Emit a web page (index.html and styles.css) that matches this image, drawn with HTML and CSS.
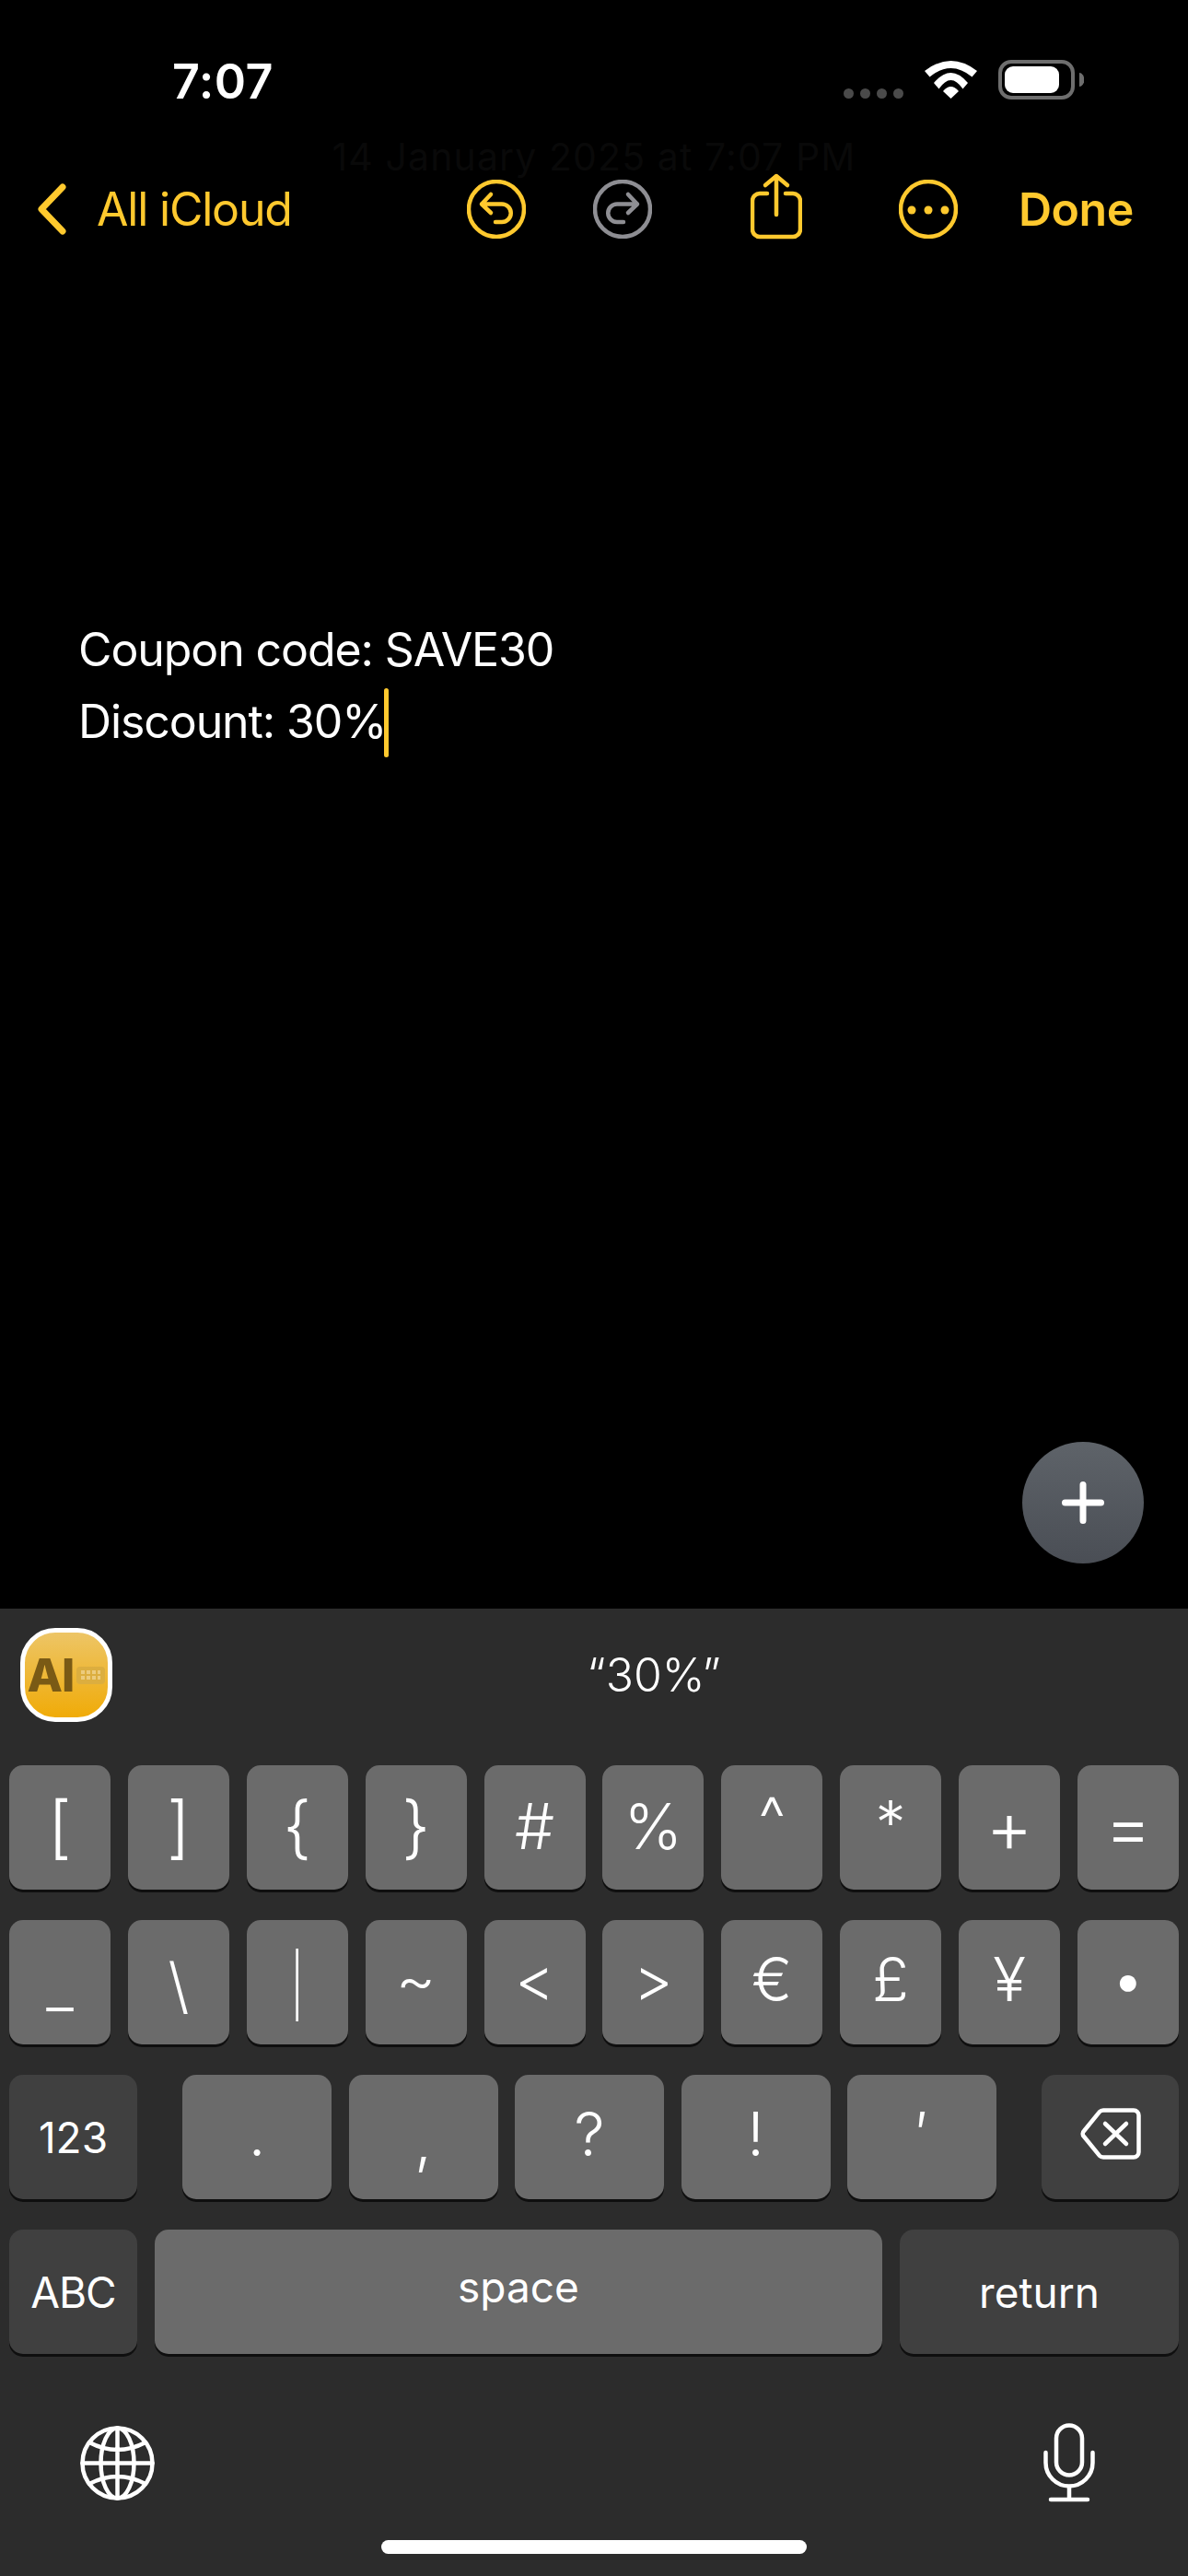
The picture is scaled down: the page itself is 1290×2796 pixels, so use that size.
FILE: index.html
```html
<!DOCTYPE html>
<html lang="en">
<head>
<meta charset="UTF-8">
<meta name="viewport" content="width=device-width, initial-scale=1.0">
<title>Notes</title>
<link rel="stylesheet" href="styles.css">
</head>
<body>
<div class="phone">
    <div class="status-bar">
        <div class="time">7:07</div>
        <div class="status-icons">
            <div class="signal"><span></span><span></span><span></span><span></span></div>
            <svg class="wifi" width="57" height="41" viewBox="0 0 57 41">
                <path d="M0 11Q28.5 -11 57 11L51.5 17.5Q28.5 -1.5 5.5 17.5Z"/>
                <path d="M10 24Q28.5 2 47 24L41.5 30.5Q28.5 11.5 15.5 30.5Z"/>
                <path d="M20 33Q28.5 23 37 33L28.5 41Z"/>
            </svg>
            <svg class="battery" width="93" height="43" viewBox="0 0 93 43">
                <rect x="2" y="2" width="79" height="39" rx="12" fill="none" stroke="#6e6e6e" stroke-width="4"/>
                <rect x="7" y="7" width="59" height="29" rx="9" fill="#fff"/>
                <path d="M88 14a5 7 0 0 1 0 15Z" fill="#6e6e6e"/>
            </svg>
        </div>
    </div>

    <div class="nav">
        <div class="nav-date">14 January 2025 at 7:07 PM</div>
        <svg class="icon chevron" width="32" height="56" viewBox="0 0 32 56">
            <path d="M27 4L4 28L27 52" stroke-width="7"/>
        </svg>
        <div class="nav-back">All iCloud</div>
        <div class="nav-actions">
            <svg class="icon" width="64" height="64" viewBox="0 0 64 64">
                <circle cx="32" cy="32" r="30"/>
                <path d="M26 16L16 26.5L26 36M16 26.5H38a9.75 9.75 0 0 1 0 19.5H31"/>
            </svg>
            <svg class="icon icon-off redo" width="64" height="64" viewBox="0 0 64 64">
                <circle cx="32" cy="32" r="30"/>
                <path d="M38 16L48 26.5L38 36M48 26.5H26a9.75 9.75 0 0 0 0 19.5H33"/>
            </svg>
            <svg class="icon share" width="56" height="72" viewBox="0 0 56 72">
                <path d="M18 22H10a8 8 0 0 0-8 8V61a8 8 0 0 0 8 8H46a8 8 0 0 0 8-8V30a8 8 0 0 0-8-8H38"/>
                <path d="M28 45V3M16 13L28 3L40 13"/>
            </svg>
            <svg class="icon more" width="64" height="64" viewBox="0 0 64 64">
                <circle cx="32" cy="32" r="30"/>
                <circle class="dot" cx="14" cy="33" r="4.5"/>
                <circle class="dot" cx="32" cy="33" r="4.5"/>
                <circle class="dot" cx="50" cy="33" r="4.5"/>
            </svg>
            <div class="nav-done">Done</div>
        </div>
    </div>

    <div class="note">
        <div class="note-line">Coupon code: SAVE30</div>
        <div class="note-line">Discount: 30%<span class="caret"></span></div>
        <div class="fab">
            <svg width="54" height="54" viewBox="0 0 54 54">
                <path d="M27 7.500V46.500M7.500 27H46.500" stroke="#fff" stroke-width="7" stroke-linecap="round"/>
            </svg>
        </div>
    </div>

    <div class="keyboard">
        <div class="suggest-bar">
            <div class="ai-badge">
                <span class="ai-text">AI</span>
                <svg class="ai-keys" width="31" height="19" viewBox="0 0 31 19">
                    <rect width="31" height="19" rx="4" fill="#dcae3f"/>
                    <path d="M5 6H26M5 12H26" stroke="#eccb7c" stroke-width="4" stroke-dasharray="4 2"/>
                </svg>
            </div>
            <div class="suggest-text">“30%”</div>
        </div>

        <div class="key-rows">
            <div class="key-row">
                <div class="key key-tall">[</div>
                <div class="key key-tall">]</div>
                <div class="key key-tall">{</div>
                <div class="key key-tall">}</div>
                <div class="key key-sym">#</div>
                <div class="key key-sym">%</div>
                <div class="key key-high">^</div>
                <div class="key key-star">*</div>
                <div class="key key-math">+</div>
                <div class="key key-math">=</div>
            </div>
            <div class="key-row">
                <div class="key key-drop">_</div>
                <div class="key key-drop">\</div>
                <div class="key key-drop key-thin">|</div>
                <div class="key">~</div>
                <div class="key">&lt;</div>
                <div class="key">&gt;</div>
                <div class="key">€</div>
                <div class="key">£</div>
                <div class="key">¥</div>
                <div class="key">•</div>
            </div>
            <div class="key-row">
                <div class="key key-dark key-side key-label">123</div>
                <div class="key-group">
                    <div class="key key-punct">.</div>
                    <div class="key key-punct key-drop">,</div>
                    <div class="key key-punct">?</div>
                    <div class="key key-punct">!</div>
                    <div class="key key-punct">′</div>
                </div>
                <div class="key key-dark key-delete">
                    <svg class="backspace" width="66" height="56" viewBox="0 0 66 56">
                        <path d="M25 2.5H58a5.5 5.5 0 0 1 5.5 5.5V48a5.5 5.5 0 0 1-5.5 5.5H25a6 6 0 0 1-4.2-1.8L4 31a4 4 0 0 1 0-6L20.800 4.300A6 6 0 0 1 25 2.500Z"/>
                        <path d="M27 17L50 39M50 17L27 39"/>
                    </svg>
                </div>
            </div>
            <div class="key-row">
                <div class="key key-dark key-side key-label key-abc">ABC</div>
                <div class="key key-space key-label">space</div>
                <div class="key key-dark key-return key-label">return</div>
            </div>
        </div>

        <div class="keyboard-tools">
            <svg class="tool" width="81" height="81" viewBox="0 0 81 81">
                <circle cx="40.500" cy="40.500" r="38"/>
                <ellipse cx="40.500" cy="40.500" rx="18" ry="38"/>
                <path d="M40.500 2.500V78.500M2.500 40.500H78.500M10 18Q40.500 34 71 18M10 63Q40.500 47 71 63"/>
            </svg>
            <svg class="tool" width="56" height="86" viewBox="0 0 56 86">
                <rect x="14" y="2.500" width="28" height="54" rx="14"/>
                <path d="M2.500 32V43a25.500 25.500 0 0 0 51 0V32M28 68.500V83M8 83H48"/>
            </svg>
        </div>
        <div class="home-bar"></div>
    </div>
</div>
</body>
</html>
```

FILE: styles.css
```css
* {
    box-sizing: border-box;
}
body {
    margin: 0;
    background-color: #000;
    font-family: Inter, "Noto Sans", sans-serif;
    color: #fff;
}
.phone {
    width: 1290px;
    height: 2796px;
    display: flex;
    flex-direction: column;
    overflow: hidden;
    background-color: #000;
}

/* status bar */
.status-bar {
    height: 176px;
    flex: none;
    display: flex;
    justify-content: space-between;
    align-items: center;
    padding: 0 113px 0 187px;
}
.time {
    font-size: 52px;
    font-weight: 600;
    letter-spacing: 0.5px;
}
.status-icons {
    display: flex;
    align-items: flex-end;
    gap: 23px;
    margin-top: -3px;
}
.signal {
    display: flex;
    gap: 7px;
    margin-bottom: 1px;
}
.signal span {
    width: 11px;
    height: 11px;
    border-radius: 50%;
    background-color: #4a4a4a;
}
.wifi {
    fill: #fff;
    margin-bottom: 1px;
}

/* nav */
.nav {
    position: relative;
    height: 102px;
    flex: none;
    display: flex;
    align-items: center;
    padding: 0 63px 0 41px;
    color: #ffc92e;
    font-size: 50px;
}
.nav-date {
    position: absolute;
    top: -31px;
    left: 0;
    right: 0;
    text-align: center;
    font-size: 41px;
    letter-spacing: 1.1px;
    color: #090909;
}
.nav-back {
    letter-spacing: -1.2px;
}
.icon {
    fill: none;
    stroke: #ffc92e;
    stroke-width: 4.500;
    stroke-linecap: round;
    stroke-linejoin: round;
    flex: none;
}
.icon-off {
    stroke: #8e8e93;
}
.icon .dot {
    fill: #ffc92e;
    stroke: none;
}
.chevron {
    margin-right: 32px;
}
.nav-actions {
    display: flex;
    align-items: center;
    margin-left: auto;
}
.redo {
    margin-left: 73px;
}
.share {
    margin-left: 107px;
    margin-bottom: 6px;
}
.more {
    margin-left: 105px;
}
.nav-done {
    width: 121px;
    margin-left: 66px;
    font-weight: 600;
    letter-spacing: -0.5px;
    white-space: nowrap;
}

/* note body */
.note {
    position: relative;
    flex: 1;
    padding: 388px 0 0 85px;
    font-size: 50px;
    line-height: 78px;
    letter-spacing: -1.1px;
}
.caret {
    display: inline-block;
    width: 5px;
    height: 75px;
    margin-left: -2px;
    border-radius: 3px;
    background-color: #ffc92e;
    vertical-align: -21px;
}
.fab {
    position: absolute;
    right: 48px;
    bottom: 49px;
    width: 132px;
    height: 132px;
    border-radius: 50%;
    display: flex;
    align-items: center;
    justify-content: center;
    background: linear-gradient(#5e6369, #4a4e55);
}

/* keyboard */
.keyboard {
    height: 1050px;
    flex: none;
    background-color: #2c2c2c;
}
.suggest-bar {
    height: 170px;
    display: flex;
    align-items: flex-start;
    padding: 21px 0 0 22px;
}
.ai-badge {
    width: 100px;
    height: 102px;
    border: 5px solid #fff;
    border-radius: 38px;
    display: flex;
    align-items: center;
    justify-content: center;
    gap: 3px;
    flex: none;
    background: linear-gradient(#edc566, #f0ab08);
}
.ai-text {
    font-size: 50px;
    font-weight: 800;
    color: #7a5a15;
    letter-spacing: -1px;
    line-height: 1;
}
.ai-keys {
    flex: none;
}
.suggest-text {
    flex: 1;
    padding: 21px 0 0 8px;
    text-align: center;
    font-size: 50px;
    font-weight: 300;
    line-height: 60px;
}
.key-rows {
    display: flex;
    flex-direction: column;
    gap: 33px;
    padding: 0 10px;
}
.key-row {
    display: flex;
    justify-content: space-between;
    height: 135px;
}
.key {
    width: 110px;
    height: 135px;
    display: flex;
    align-items: center;
    justify-content: center;
    border-radius: 15px;
    background-color: #6b6b6b;
    box-shadow: 0 3px 0 #0f0f0f;
    font-size: 66px;
    font-weight: 300;
    line-height: 1;
    padding-bottom: 8px;
}
.key-tall {
    font-size: 74px;
    padding-bottom: 4px;
}
.key-sym {
    font-size: 68px;
    padding-bottom: 4px;
}
.key-high {
    padding-bottom: 22px;
}
.key-star {
    padding-bottom: 12px;
}
.key-math {
    font-size: 78px;
    padding-bottom: 2px;
}
.key-drop {
    padding-top: 6px;
    padding-bottom: 0;
}
.key-thin {
    font-weight: 200;
}
.key-dark {
    background-color: #404040;
}
.key-side {
    width: 139px;
}
.key-delete {
    width: 149px;
}
.key-group {
    display: flex;
    gap: 18.500px;
}
.key-punct {
    width: 162px;
}
.key-label {
    font-size: 46px;
    font-weight: 400;
    padding-bottom: 0;
}
.key-abc {
    letter-spacing: -1px;
}
.key-space {
    width: 790px;
    padding-bottom: 11px;
}
.key-return {
    width: 303px;
}
.backspace {
    fill: none;
    stroke: #fff;
    stroke-width: 4.500;
    stroke-linecap: round;
    stroke-linejoin: round;
}
.keyboard-tools {
    display: flex;
    justify-content: space-between;
    align-items: center;
    height: 86px;
    margin-top: 75px;
    padding: 0 101px 0 87px;
}
.tool {
    fill: none;
    stroke: #fff;
    stroke-width: 4.500;
    stroke-linecap: round;
}
.home-bar {
    width: 462px;
    height: 15px;
    margin: 41px auto 0;
    border-radius: 8px;
    background-color: #fff;
}
```
